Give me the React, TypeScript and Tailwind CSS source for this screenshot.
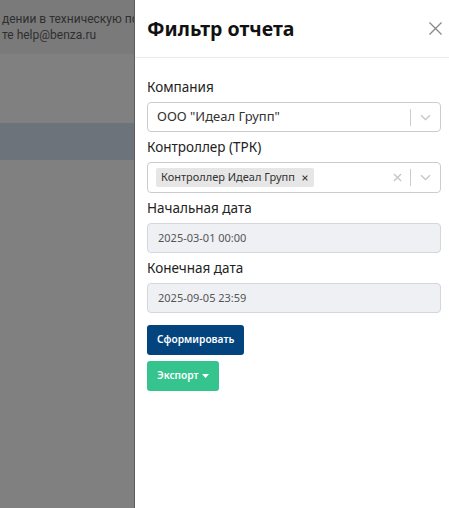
import React from "react";

const font = { fontFamily: '"Noto Sans", "Open Sans", sans-serif' };

function Chevron() {
  return (
    <svg width="11" height="7" viewBox="0 0 11 7" fill="none">
      <path d="M1 1.2 L5.5 5.5 L10 1.2" stroke="#c7c7c7" strokeWidth="1.3" />
    </svg>
  );
}

function SmallX({ color = "#c7c7c7", size = 9, w = 1.6 }: { color?: string; size?: number; w?: number }) {
  return (
    <svg width={size} height={size} viewBox="0 0 10 10" fill="none">
      <path d="M1 1 L9 9 M9 1 L1 9" stroke={color} strokeWidth={w} />
    </svg>
  );
}

export default function App() {
  return (
    <div className="flex h-[508px] w-[449px] overflow-hidden bg-white" style={font}>
      {/* backdrop page */}
      <div className="flex w-[134px] shrink-0 flex-col overflow-hidden bg-[#808080]">
        <div
          className="h-[54px] shrink-0 bg-[#7a7a7a] pl-[2px] pt-[11px] text-[12px] leading-[16px] text-[#2f2f2f] whitespace-nowrap"
          style={{ fontFamily: 'Roboto, "Noto Sans", sans-serif' }}
        >
          <div>дении в техническую поддержку</div>
          <div>те help@benza.ru</div>
        </div>
        <div className="h-[69px] shrink-0 bg-[#808080]" />
        <div className="h-[37px] shrink-0 bg-[#6c737a]" />
        <div className="flex-1 bg-[#808080]" />
      </div>

      {/* panel */}
      <div className="flex w-[315px] shrink-0 flex-col border-l border-[#5c5c5c] bg-white">
        <div className="flex h-[58px] shrink-0 items-center justify-between border-b border-[#ececec] pl-[12px] pr-[7px]">
          <div className="text-[19.5px] font-bold leading-[24px] text-[#111]">Фильтр отчета</div>
          <svg width="13" height="13" viewBox="0 0 13 13" fill="none">
            <path d="M0.5 0.5 L12.5 12.5 M12.5 0.5 L0.5 12.5" stroke="#8a8a8a" strokeWidth="1.4" />
          </svg>
        </div>

        <div className="flex flex-col pl-[12px] pr-[8px] pt-[19px]">
          <div className="mb-[5px] text-[13.5px] leading-[20px] text-[#222]">Компания</div>
          <div className="flex h-[30px] items-center rounded-[4px] border border-[#cccccc]">
            <div className="flex-1 pl-[9px] text-[13px] text-[#333]">ООО "Идеал Групп"</div>
            <div className="h-[17px] w-px bg-[#cccccc]" />
            <div className="flex w-[29px] items-center justify-center">
              <Chevron />
            </div>
          </div>

          <div className="mb-[5px] mt-[5px] text-[13.5px] leading-[20px] text-[#222]">Контроллер (ТРК)</div>
          <div className="flex h-[31px] items-center rounded-[4px] border border-[#cccccc]">
            <div className="flex flex-1 items-center pl-[8px]">
              <div className="flex h-[19px] items-center gap-[7px] rounded-[2px] bg-[#e6e6e6] pl-[5px] pr-[6px] text-[11px] text-[#333]">
                <span>Контроллер Идеал Групп</span>
                <SmallX color="#444" size={6} w={2} />
              </div>
            </div>
            <div className="flex w-[25px] items-center justify-center">
              <SmallX />
            </div>
            <div className="h-[17px] w-px bg-[#cccccc]" />
            <div className="flex w-[29px] items-center justify-center">
              <Chevron />
            </div>
          </div>

          <div className="mb-[5px] mt-[5px] text-[13.5px] leading-[20px] text-[#222]">Начальная дата</div>
          <div className="flex h-[30px] items-center rounded-[4px] border border-[#d3d7dc] bg-[#eef0f4] pl-[10px] text-[11px] text-[#555]">
            2025-03-01 00:00
          </div>

          <div className="mb-[5px] mt-[5px] text-[13.5px] leading-[20px] text-[#222]">Конечная дата</div>
          <div className="flex h-[30px] items-center rounded-[4px] border border-[#d3d7dc] bg-[#eef0f4] pl-[10px] text-[11px] text-[#555]">
            2025-09-05 23:59
          </div>

          <div className="mt-[12px] flex">
            <div className="flex h-[30px] items-center rounded-[3px] bg-[#03447f] px-[10px] text-[10.2px] font-semibold text-white">
              Сформировать
            </div>
          </div>
          <div className="mt-[6px] flex">
            <div className="flex h-[30px] items-center gap-[3px] rounded-[3px] bg-[#35c48e] px-[10px] text-[10.2px] font-semibold text-white">
              <span>Экспорт</span>
              <svg width="7" height="4" viewBox="0 0 7 4">
                <path d="M0 0 L7 0 L3.5 4 Z" fill="white" />
              </svg>
            </div>
          </div>
        </div>
      </div>
    </div>
  );
}
